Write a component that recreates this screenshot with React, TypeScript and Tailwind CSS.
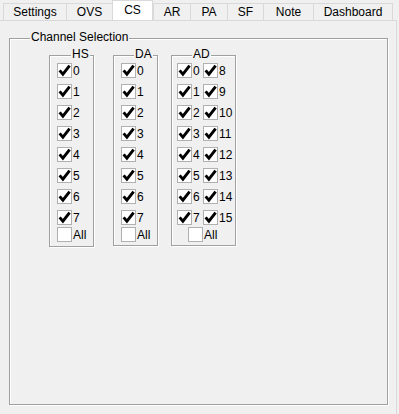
import React from 'react'

const font = { fontFamily: '"Segoe UI", "Liberation Sans", Arial, sans-serif' }

const tabs = [
  { label: 'Settings', w: 'w-[63px]' },
  { label: 'OVS', w: 'w-[46px]' },
  { label: 'CS', w: 'w-[41px]', active: true },
  { label: 'AR', w: 'w-[37px]' },
  { label: 'PA', w: 'w-[37px]' },
  { label: 'SF', w: 'w-[36px]' },
  { label: 'Note', w: 'w-[50px]' },
  { label: 'Dashboard', w: 'w-[80px]' },
]

function Check({ checked }: { checked: boolean }) {
  return (
    <span className="w-[15px] h-[15px] shrink-0 border border-[#b0b0b0] bg-white flex items-center justify-center">
      {checked && (
        <svg width="13" height="13" viewBox="0 0 13 13">
          <path d="M1.6 6.4 L4.9 10.2 L11.6 1.6" fill="none" stroke="#000" strokeWidth="2.9" strokeLinejoin="miter" strokeMiterlimit="10" />
        </svg>
      )}
    </span>
  )
}

function Item({ label, checked = true }: { label: string; checked?: boolean }) {
  return (
    <div className="flex items-center h-[21px]">
      <Check checked={checked} />
      <span className="ml-[1px] text-[12px] leading-none text-[#000]">{label}</span>
    </div>
  )
}

function Group({ title, children, className, titleClass }: { title: string; children: React.ReactNode; className: string; titleClass: string }) {
  return (
    <div className={`relative border border-[#a0a0a0] shadow-[inset_1px_1px_0_#fff,1px_1px_0_#fff] ${className}`}>
      <span className={`absolute -top-[10px] bg-[#f0f0f0] px-[1px] text-[12px] leading-[16px] text-black ${titleClass}`}>{title}</span>
      {children}
    </div>
  )
}

const nums = ['0', '1', '2', '3', '4', '5', '6', '7']

export default function App() {
  return (
    <div className="w-[399px] h-[414px] bg-[#f0f0f0] relative overflow-hidden" style={font}>
      <div className="flex pl-[3px] h-[20px] items-end">
        {tabs.map((t, i) =>
          t.active ? (
            <div
              key={t.label}
              className={`${t.w} h-[20px] relative z-10 bg-white border border-b-0 border-[#d9d9d9] flex items-center justify-center pb-[1px] text-[12px] text-black`}
            >
              {t.label}
            </div>
          ) : (
            <div
              key={t.label}
              className={`${t.w} h-[17px] bg-[#f0f0f0] border-t border-l border-[#d9d9d9] ${i === tabs.length - 1 ? 'border-r' : ''} flex items-center justify-center text-[12px] text-black`}
            >
              {t.label}
            </div>
          )
        )}
      </div>
      <div className="h-[394px] w-[397px] border-t border-r border-[#d9d9d9] pt-[17px] pl-[9px]">
        <Group title="Channel Selection" className="w-[379px] h-[367px] pl-[39px] pt-[16px]" titleClass="left-[20px]">
          <div className="flex items-start">
            <Group title="HS" className="w-[45px] h-[192px] pl-[7px] pt-[4px]" titleClass="left-[21px]">
              {nums.map((n) => (
                <Item key={n} label={n} />
              ))}
              <div className="-mt-[4px]">
                <Item label="All" checked={false} />
              </div>
            </Group>
            <Group title="DA" className="w-[45px] h-[191px] ml-[19px] pl-[7px] pt-[4px]" titleClass="left-[20px]">
              {nums.map((n) => (
                <Item key={n} label={n} />
              ))}
              <div className="-mt-[4px]">
                <Item label="All" checked={false} />
              </div>
            </Group>
            <Group title="AD" className="w-[65px] h-[191px] ml-[13px] pl-[5px] pt-[4px]" titleClass="left-[20px]">
              {nums.map((n) => (
                <div key={n} className="flex">
                  <div className="w-[26px]">
                    <Item label={n} />
                  </div>
                  <Item label={String(Number(n) + 8)} />
                </div>
              ))}
              <div className="-mt-[4px] pl-[11px]">
                <Item label="All" checked={false} />
              </div>
            </Group>
          </div>
        </Group>
      </div>
    </div>
  )
}
